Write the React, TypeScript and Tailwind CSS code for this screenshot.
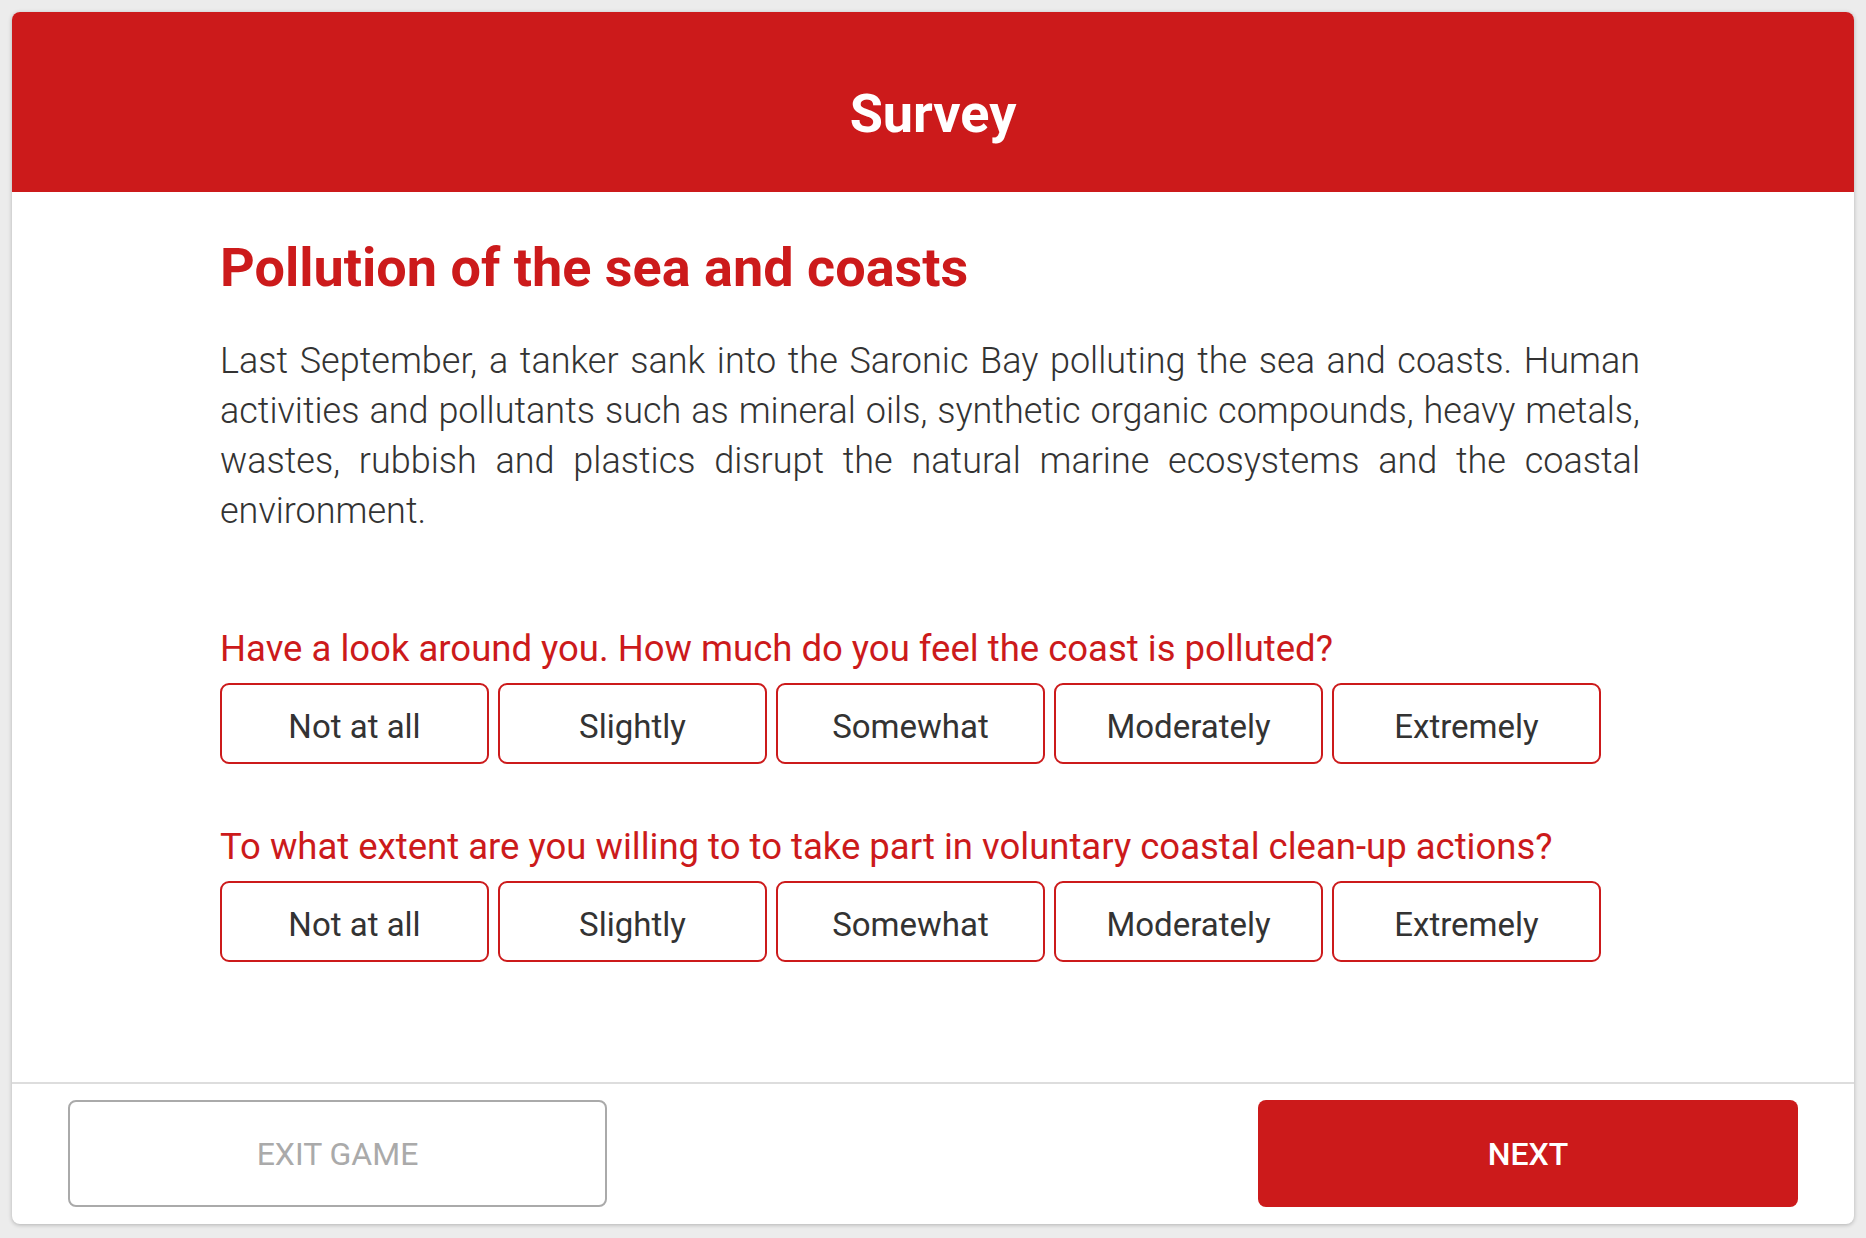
const options = ["Not at all", "Slightly", "Somewhat", "Moderately", "Extremely"];

const questions = [
  "Have a look around you. How much do you feel the coast is polluted?",
  "To what extent are you willing to to take part in voluntary coastal clean-up actions?",
];

function OptionRow() {
  return (
    <div className="mt-[12px] flex gap-[9px]">
      {options.map((label) => (
        <button
          key={label}
          className="flex h-[81px] w-[269px] items-center justify-center rounded-[9px] border-2 border-[#cc1a1b] bg-white pt-[6px] text-[33px] text-[#333333]"
        >
          {label}
        </button>
      ))}
    </div>
  );
}

export default function App() {
  return (
    <div
      className="min-h-screen bg-[#ececec] p-3"
      style={{ fontFamily: "Roboto, 'Liberation Sans', sans-serif" }}
    >
      <div className="flex h-[1212px] flex-col overflow-hidden rounded-[8px] bg-white shadow-[0_1px_4px_rgba(0,0,0,0.25)]">
        <header className="flex h-[180px] items-center justify-center bg-[#cc1a1b] pt-[24px]">
          <h1 className="text-[54px] font-bold leading-none text-white">Survey</h1>
        </header>

        <main className="flex-1 pl-[208px] pt-[44px]">
          <div className="w-[1420px]">
            <h2 className="text-[54px] font-bold leading-[64px] text-[#cc1a1b]">
              Pollution of the sea and coasts
            </h2>
            <p className="mt-[36px] text-justify text-[36px] font-light leading-[50px] text-[#333333]">
              Last September, a tanker sank into the Saronic Bay polluting the sea and coasts.
              Human activities and pollutants such as mineral oils, synthetic organic compounds,
              heavy metals, wastes, rubbish and plastics disrupt the natural marine ecosystems and
              the coastal environment.
            </p>

            <h3 className="mt-[91px] text-[36.5px] leading-[44px] text-[#cc1a1b]">{questions[0]}</h3>
            <OptionRow />

            <h3 className="mt-[61px] text-[36.5px] leading-[44px] text-[#cc1a1b]">{questions[1]}</h3>
            <OptionRow />
          </div>
        </main>

        <footer className="flex justify-between border-t-2 border-[#dddddd] px-[56px] pb-[17px] pt-[16px]">
          <button className="flex h-[107px] w-[539px] items-center justify-center rounded-[8px] border-2 border-[#aaaaaa] bg-white text-[32px] uppercase text-[#aaaaaa]">
            Exit game
          </button>
          <button className="flex h-[107px] w-[540px] items-center justify-center rounded-[8px] bg-[#cc1a1b] text-[32px] font-medium uppercase text-white">
            Next
          </button>
        </footer>
      </div>
    </div>
  );
}
